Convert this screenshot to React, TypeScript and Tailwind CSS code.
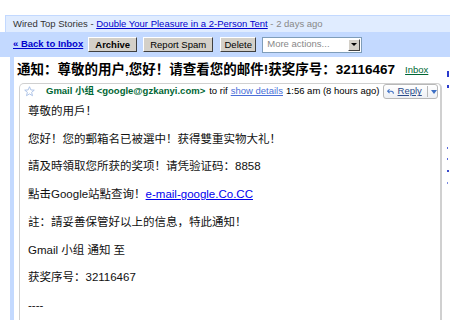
import React from 'react';

const font = "font-['Liberation_Sans','Noto_Sans_CJK_SC',sans-serif]";

// classic grey 3D button
const Btn: React.FC<{ label: string; bold?: boolean; w: string }> = ({ label, bold, w }) => (
  <button
    className={`${w} h-[15px] bg-[#d4d0c8] border border-t-white border-l-white border-r-[#404040] border-b-[#404040] text-[9.5px] leading-none text-black flex items-center justify-center ${bold ? 'font-bold' : ''}`}
  >
    {label}
  </button>
);

const StarIcon = () => (
  <svg width="11" height="11" viewBox="0 0 12 12">
    <path
      d="M6 0.8 L7.5 4.3 L11.2 4.5 L8.3 6.9 L9.3 10.6 L6 8.6 L2.7 10.6 L3.7 6.9 L0.8 4.5 L4.5 4.3 Z"
      fill="none"
      stroke="#a8bfe6"
      strokeWidth="1"
      strokeLinejoin="round"
    />
  </svg>
);

const ReplyIcon = () => (
  <svg width="11" height="9" viewBox="0 0 11 9">
    <path d="M4 1 L1 4 L4 7" fill="none" stroke="#3d6fc4" strokeWidth="1.6" />
    <path d="M1.5 4 H6.5 Q10 4 10 8" fill="none" stroke="#3d6fc4" strokeWidth="1.6" />
  </svg>
);

const bodyLines: React.ReactNode[] = [
  '尊敬的用戶！',
  '您好！您的郵箱名已被選中！获得雙重实物大礼！',
  '請及時領取您所获的奖项！请凭验证码：8858',
  <>
    點击Google站點查询！<a className="text-[#0000ee] underline">e-mail-google.Co.CC</a>
  </>,
  '註：請妥善保管好以上的信息，特此通知！',
  'Gmail 小组 通知 至',
  '获奖序号：32116467',
  '----',
];

export default function App() {
  return (
    <div className={`w-[450px] h-[320px] overflow-hidden bg-white ${font}`}>
      <div className="h-[15px]" />

      {/* top stories bar */}
      <div className="ml-[5px] h-[17px] bg-[#e0ecff] border-t border-l border-[#c3d9ff] flex items-center pl-[7px] text-[9.5px] text-[#333] whitespace-nowrap">
        Wired Top Stories -&nbsp;
        <a className="text-[#0000cc] underline">Double Your Pleasure in a 2-Person Tent</a>
        <span className="text-[#888]">&nbsp;- 2 days ago</span>
      </div>

      {/* toolbar */}
      <div className="h-[25px] bg-[#c3d9ff] flex items-center pl-[13px] gap-[6px]">
        <a className="text-[9.5px] font-bold text-[#0000cc] underline mr-[-1px] whitespace-nowrap">« Back to Inbox</a>
        <Btn label="Archive" bold w="w-[49px]" />
        <Btn label="Report Spam" w="w-[70px]" />
        <Btn label="Delete" w="w-[36px] ml-[1px]" />
        <div className="w-[100px] h-[16px] bg-white border border-[#7f9db9] flex items-center">
          <span className="flex-1 pl-[4px] text-[9.5px] text-[#888]">More actions...</span>
          <span className="w-[12px] h-[12px] mr-[1px] bg-[#d4d0c8] border border-t-white border-l-white border-r-[#404040] border-b-[#404040] flex items-center justify-center">
            <span className="w-0 h-0 border-l-[3px] border-r-[3px] border-t-[3px] border-l-transparent border-r-transparent border-t-black" />
          </span>
        </div>
      </div>

      <div className="flex">
        <div className="w-[10px]" />
        <div className="w-[4px] h-[270px] bg-[#c3d9ff]" />

        <div className="w-[428px]">
          {/* subject */}
          <div className="h-[26px] flex items-center pl-[3px] whitespace-nowrap">
            <span className="text-[13.5px] font-bold text-black">
              通知：尊敬的用户,您好！请查看您的邮件!获奖序号：32116467
            </span>
            <a className="ml-[10px] text-[9.5px] text-[#006633] underline">Inbox</a>
          </div>

          {/* message card */}
          <div className="ml-[5px] w-[423px] h-[250px] border-l border-t border-r-2 border-[#d0d0d0] rounded-tl-[5px] rounded-tr-[5px]">
            <div className="h-[15px] flex items-center pl-[4px] whitespace-nowrap text-[9.5px]">
              <StarIcon />
              <span className="ml-[11px] font-bold text-[#006633]">Gmail 小组 &lt;google@gzkanyi.com&gt;</span>
              <span className="ml-[4px] text-black">to rif</span>
              <a className="ml-[3px] text-[#4a6fd8] underline">show details</a>
              <span className="ml-[3px] text-black">1:56 am (8 hours ago)</span>
              <div className="ml-[4px] h-[15px] w-[55px] border border-[#b8b8b8] rounded-[3px] bg-gradient-to-b from-white to-[#eef0f4] flex items-center pl-[3px]">
                <ReplyIcon />
                <span className="ml-[3px] text-[#2a4a8a] underline">Reply</span>
                <span className="ml-[5px] h-[11px] w-px bg-[#b8b8b8]" />
                <span className="ml-[4px] w-0 h-0 border-l-[3px] border-r-[3px] border-t-[4px] border-l-transparent border-r-transparent border-t-[#3d6fc4]" />
              </div>
            </div>

            <div className="pl-[8px] -mt-[1px] text-[11.5px] text-[#111]">
              {bodyLines.map((l, i) => (
                <p key={i} className="leading-[27.7px] whitespace-nowrap">
                  {l}
                </p>
              ))}
            </div>
          </div>
        </div>

        {/* right sidebar, cut off at the window edge: only slivers show */}
        <div className="ml-[5px] w-[3px] pt-[14px] flex flex-col">
          <div className="w-[2px] h-[6px] bg-[#2a3acc]" />
          <div className="h-[8px]" />
          <div className="w-[2px] h-[3px] bg-[#2a3acc]" />
          <div className="h-[59px]" />
          <div className="w-[1px] h-[2px] bg-[#5a6adc]" />
          <div className="h-[9px]" />
          <div className="w-[1px] h-[2px] bg-[#5a6adc]" />
          <div className="h-[10px]" />
          <div className="w-[2px] h-[2px] bg-[#3a4acc]" />
          <div className="h-[10px]" />
          <div className="w-[1px] h-[2px] bg-[#7a8ae0]" />
        </div>
      </div>
    </div>
  );
}
